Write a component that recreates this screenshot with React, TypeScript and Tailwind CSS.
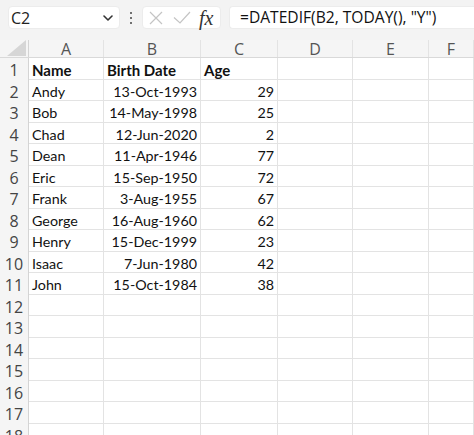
import React from "react";

const columns = ["A", "B", "C", "D", "E", "F"];

const people = [
  { name: "Andy", date: "13-Oct-1993", age: 29 },
  { name: "Bob", date: "14-May-1998", age: 25 },
  { name: "Chad", date: "12-Jun-2020", age: 2 },
  { name: "Dean", date: "11-Apr-1946", age: 77 },
  { name: "Eric", date: "15-Sep-1950", age: 72 },
  { name: "Frank", date: "3-Aug-1955", age: 67 },
  { name: "George", date: "16-Aug-1960", age: 62 },
  { name: "Henry", date: "15-Dec-1999", age: 23 },
  { name: "Isaac", date: "7-Jun-1980", age: 42 },
  { name: "John", date: "15-Oct-1984", age: 38 },
];

const gridCols = "grid grid-cols-[29px_75px_97px_77px_75px_76px_1fr]";
const uiFont = "font-['Open_Sans',sans-serif]";
const cellFont = "font-['Lato',sans-serif]";

function Toolbar() {
  return (
    <div className={`flex items-center h-[40px] bg-[#f3f3f3] pt-[6px] pb-[11px] pl-[8px] ${uiFont}`}>
      {/* Name box */}
      <div className="flex items-center justify-between w-[112px] h-[23px] bg-white rounded-[4px] border border-[#ececec] pl-[2px] pr-[6px]">
        <span className="text-[16px] text-[#222]">C2</span>
        <svg width="10" height="6" viewBox="0 0 10 6" fill="none">
          <path d="M1 1l4 4 4-4" stroke="#333" strokeWidth="1.6" strokeLinecap="round" strokeLinejoin="round" />
        </svg>
      </div>

      {/* Vertical dots */}
      <div className="flex flex-col gap-[3px] mx-[10px]">
        <span className="w-[2px] h-[2px] bg-[#444] rounded-full" />
        <span className="w-[2px] h-[2px] bg-[#444] rounded-full" />
        <span className="w-[2px] h-[2px] bg-[#444] rounded-full" />
      </div>

      {/* Cancel / enter / fx */}
      <div className="flex items-center w-[79px] h-[23px] bg-white rounded-[4px] border border-[#ececec] pl-[6px]">
        <svg width="14" height="14" viewBox="0 0 14 14" fill="none">
          <path d="M1 1l12 12M13 1L1 13" stroke="#c4c4c4" strokeWidth="1.2" />
        </svg>
        <svg width="18" height="13" viewBox="0 0 18 13" fill="none" className="ml-[10px]">
          <path d="M1 6.5l6 5.5L17 1" stroke="#c4c4c4" strokeWidth="1.2" />
        </svg>
        <span className="ml-[8px] text-[20px] italic text-[#333] font-['Liberation_Serif',serif] leading-none">
          fx
        </span>
      </div>

      {/* Formula input */}
      <div className="flex-1 flex items-center h-[23px] ml-[8px] bg-white rounded-l-[4px] border border-r-0 border-[#ececec] pl-[10px]">
        <span className="text-[15.6px] text-[#111] whitespace-nowrap">=DATEDIF(B2, TODAY(), "Y")</span>
      </div>
    </div>
  );
}

function HeaderRow() {
  return (
    <div className={`${gridCols} h-[18px] bg-[#f5f5f5] border-b border-[#d9d9d9] ${uiFont}`}>
      <div className="relative border-r border-[#d4d4d4]">
        <svg width="19" height="16" viewBox="0 0 19 16" className="absolute right-[2px] bottom-[1px]">
          <path d="M19 0V16H0Z" fill="#d6d6d6" />
        </svg>
      </div>
      {columns.map((c) => (
        <div
          key={c}
          className="flex items-center justify-center border-r border-[#e3e3e3] text-[16px] text-[#555] leading-none"
        >
          {c}
        </div>
      ))}
    </div>
  );
}

function Row({ n, children }: { n: number; children?: React.ReactNode[] }) {
  const cells = children ?? [];
  return (
    <div className={`${gridCols} h-[21.5px] border-b border-[#e3e3e3]`}>
      <div className={`flex items-center justify-center bg-[#f5f5f5] border-r border-[#d4d4d4] text-[16px] text-[#444] ${uiFont}`}>
        {n}
      </div>
      {columns.map((c, i) => (
        <div key={c} className={`flex items-center border-r border-[#e3e3e3] text-[14.3px] text-[#111] ${cellFont}`}>
          {cells[i]}
        </div>
      ))}
    </div>
  );
}

export default function App() {
  return (
    <div className="w-[474px] h-[435px] overflow-hidden bg-white">
      <Toolbar />
      <HeaderRow />
      <Row n={1}>
        {[
          <span key="a" className="pl-[3px] font-bold text-[15px]">Name</span>,
          <span key="b" className="pl-[3px] font-bold text-[15px]">Birth Date</span>,
          <span key="c" className="pl-[3px] font-bold text-[15px]">Age</span>,
        ]}
      </Row>
      {people.map((p, i) => (
        <Row key={p.name} n={i + 2}>
          {[
            <span key="a" className="pl-[3px]">{p.name}</span>,
            <span key="b" className="ml-auto pr-[3px]">{p.date}</span>,
            <span key="c" className="ml-auto pr-[3px]">{p.age}</span>,
          ]}
        </Row>
      ))}
      {Array.from({ length: 7 }).map((_, i) => (
        <Row key={i} n={i + 12} />
      ))}
    </div>
  );
}
